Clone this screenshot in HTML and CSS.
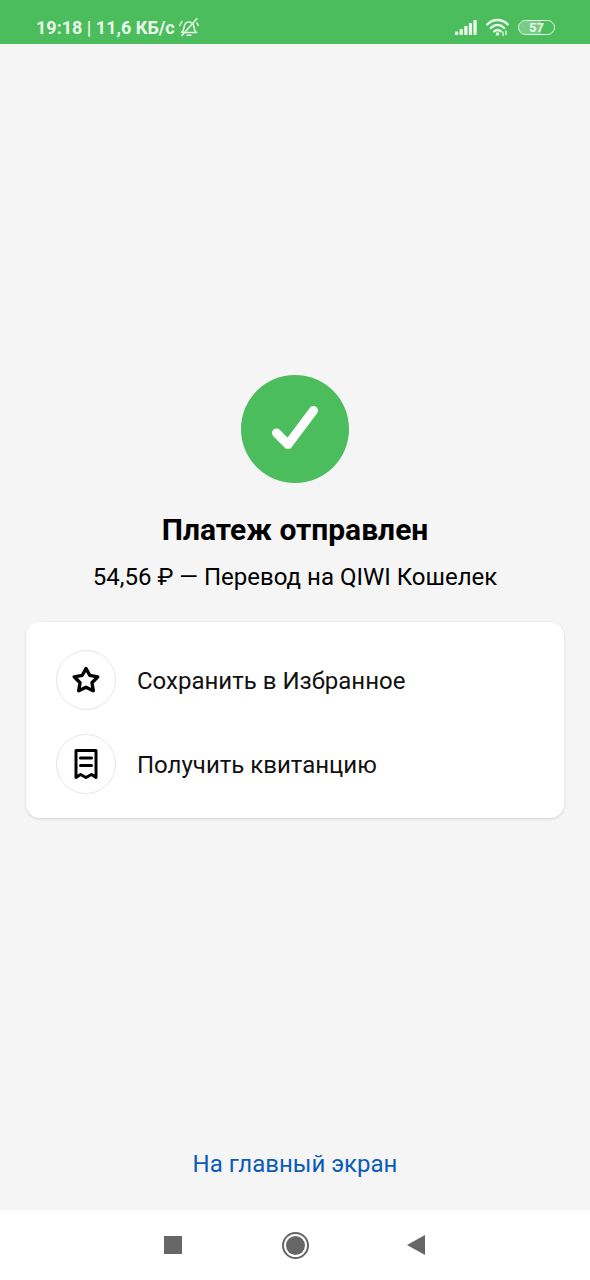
FILE: index.html
```html
<!DOCTYPE html>
<html lang="ru">
<head>
  <meta charset="UTF-8">
  <meta name="viewport" content="width=device-width, initial-scale=1.0">
  <title>Платеж отправлен</title>
  <link rel="stylesheet" href="styles.css">
</head>
<body>
  <div class="status">
    <div class="status-left">
      <span>19:18 | 11,6 КБ/с</span>
      <svg class="bell" width="20" height="20" viewBox="0 0 20 20" fill="none" stroke="#eaf8ec" stroke-width="1.500" stroke-linecap="round" stroke-linejoin="round">
        <path d="M2.500 15.500c1.700-1 2.300-2.500 2.500-5 .3-3.500 2-5.500 5-5.500s4.700 2 5 5.500c.2 2.500.8 4 2.500 5z"/>
        <path d="M8 18.300h4"/>
        <path d="M3 18.500 18 1.500"/>
        <path d="M.8 8.500 2.800 4.500M19.200 8.500 18 6"/>
      </svg>
    </div>
    <div class="status-right">
      <svg width="22" height="15" viewBox="0 0 22 15" fill="#eaf8ec">
        <rect x="0" y="11.500" width="3.300" height="3.500" rx=".8"/>
        <rect x="4.600" y="9" width="3.300" height="6" rx=".8"/>
        <rect x="9.200" y="6" width="3.300" height="9" rx=".8"/>
        <rect x="13.800" y="3" width="3.300" height="12" rx=".8"/>
        <rect x="18.400" y="0" width="3.300" height="15" rx=".8"/>
      </svg>
      <svg width="23" height="18" viewBox="0 0 23 18" fill="none" stroke="#eaf8ec" stroke-width="2.400" stroke-linecap="round">
        <path d="M1.200 6.500C7 .5 16 .5 21.800 6.500"/>
        <path d="M4.800 10C9 6 14 6 18.200 10"/>
        <path d="M8.300 13.300c2-1.600 4.400-1.600 6.400 0"/>
        <circle cx="11.500" cy="16" r="1.800" fill="#eaf8ec" stroke="none"/>
        <path d="M17 14v3.500M20 13v3.500" stroke-width="1.300"/>
      </svg>
      <div class="battery"><div class="battery-fill"></div><span>57</span></div>
    </div>
  </div>

  <div class="main">
    <div class="done">
      <svg width="48" height="46" viewBox="0 0 48 46" fill="none" stroke="#fff" stroke-width="9" stroke-linecap="round" stroke-linejoin="round">
        <path d="M5.500 27 17 38.500 42.500 4.500"/>
      </svg>
    </div>
    <h1 class="title">Платеж отправлен</h1>
    <p class="sum">54,56 ₽ — Перевод на QIWI Кошелек</p>

    <div class="card">
      <div class="row">
        <div class="row-icon">
          <svg width="30" height="30" viewBox="0 0 30 30" fill="none" stroke="#000" stroke-width="3.400" stroke-linejoin="round">
            <path d="M15 3.500 18.700 10.300 26.800 11.800 21 17.700 22.300 25.800 15 22.300 7.700 25.800 9 17.700 3.200 11.800 11.300 10.300z"/>
          </svg>
        </div>
        <span class="row-text">Сохранить в Избранное</span>
      </div>
      <div class="row">
        <div class="row-icon">
          <svg width="30" height="32" viewBox="0 0 30 32" fill="none" stroke="#000" stroke-width="3" stroke-linejoin="round" stroke-linecap="round">
            <path d="M5 2.500H25V29.500L20.500 26.500 15 29.500 9.500 26.500 5 29.500z"/>
            <path d="M9.500 10H20.500M9.500 17.500H20.500"/>
          </svg>
        </div>
        <span class="row-text">Получить квитанцию</span>
      </div>
    </div>

    <a class="home-link">На главный экран</a>
  </div>

  <div class="nav">
    <div class="nav-square"></div>
    <div class="nav-circle"><div class="nav-dot"></div></div>
    <svg class="nav-back" width="18" height="20" viewBox="0 0 18 20" fill="#666"><path d="M0 10 18 0V20z"/></svg>
  </div>
</body>
</html>
```

FILE: styles.css
```css
*{
  margin: 0;
  padding: 0;
  box-sizing: border-box;
}
body{
  width: 590px;
  height: 1280px;
  display: flex;
  flex-direction: column;
  overflow: hidden;
  font-family: Roboto, "Noto Sans", sans-serif;
  background-color: #f5f5f5;
}

.status{
  height: 44px;
  flex: none;
  display: flex;
  justify-content: space-between;
  align-items: center;
  padding: 10px 35px 0 36px;
  background-color: #4bbd5c;
  color: #eaf8ec;
  font-size: 18px;
  font-weight: 700;
}
.status-left{
  display: flex;
  align-items: center;
  gap: 4px;
}
.status-right{
  display: flex;
  align-items: center;
  gap: 9px;
}
.battery{
  position: relative;
  width: 37px;
  height: 15px;
  border: 1.5px solid #eaf8ec;
  border-radius: 8px;
  display: flex;
  align-items: center;
  justify-content: center;
  overflow: hidden;
  font-size: 13px;
  font-weight: 700;
}
.battery-fill{
  position: absolute;
  left: 0;
  top: 0;
  bottom: 0;
  width: 62%;
  background-color: rgba(255,255,255,.25);
}
.battery span{
  position: relative;
}

.main{
  flex: 1;
  display: flex;
  flex-direction: column;
  align-items: center;
  padding: 331px 26px 31px;
}
.done{
  width: 108px;
  height: 108px;
  border-radius: 50%;
  background-color: #4bbd5c;
  display: flex;
  align-items: center;
  justify-content: center;
}
.title{
  margin-top: 30px;
  font-size: 30px;
  line-height: 34px;
  font-weight: 700;
  color: #000;
}
.sum{
  margin-top: 15px;
  font-size: 24px;
  line-height: 30px;
  color: #000;
}

.card{
  width: 538px;
  height: 196px;
  margin-top: 30px;
  padding: 28px 30px 24px;
  display: flex;
  flex-direction: column;
  gap: 24px;
  background-color: #fff;
  border-radius: 14px;
  box-shadow: 0 1px 3px rgba(0,0,0,.14);
}
.row{
  display: flex;
  align-items: center;
  gap: 21px;
  font-size: 24px;
  color: #111;
}
.row-text{
  padding-top: 2px;
}
.row-icon{
  width: 60px;
  height: 60px;
  flex: none;
  display: flex;
  align-items: center;
  justify-content: center;
  border: 1.5px solid #e6e6e6;
  border-radius: 50%;
}

.home-link{
  margin-top: auto;
  font-size: 24px;
  line-height: 30px;
  color: #0a5cb8;
}

.nav{
  height: 70px;
  flex: none;
  display: flex;
  align-items: center;
  justify-content: center;
  gap: 100px;
  background-color: #fff;
}
.nav-square{
  width: 18px;
  height: 18px;
  background-color: #666;
}
.nav-circle{
  width: 27px;
  height: 27px;
  border: 2px solid #666;
  border-radius: 50%;
  display: flex;
  align-items: center;
  justify-content: center;
}
.nav-dot{
  width: 19px;
  height: 19px;
  border-radius: 50%;
  background-color: #666;
}
.nav-back{
  margin: 0 2px 0 -2px;
}
```
